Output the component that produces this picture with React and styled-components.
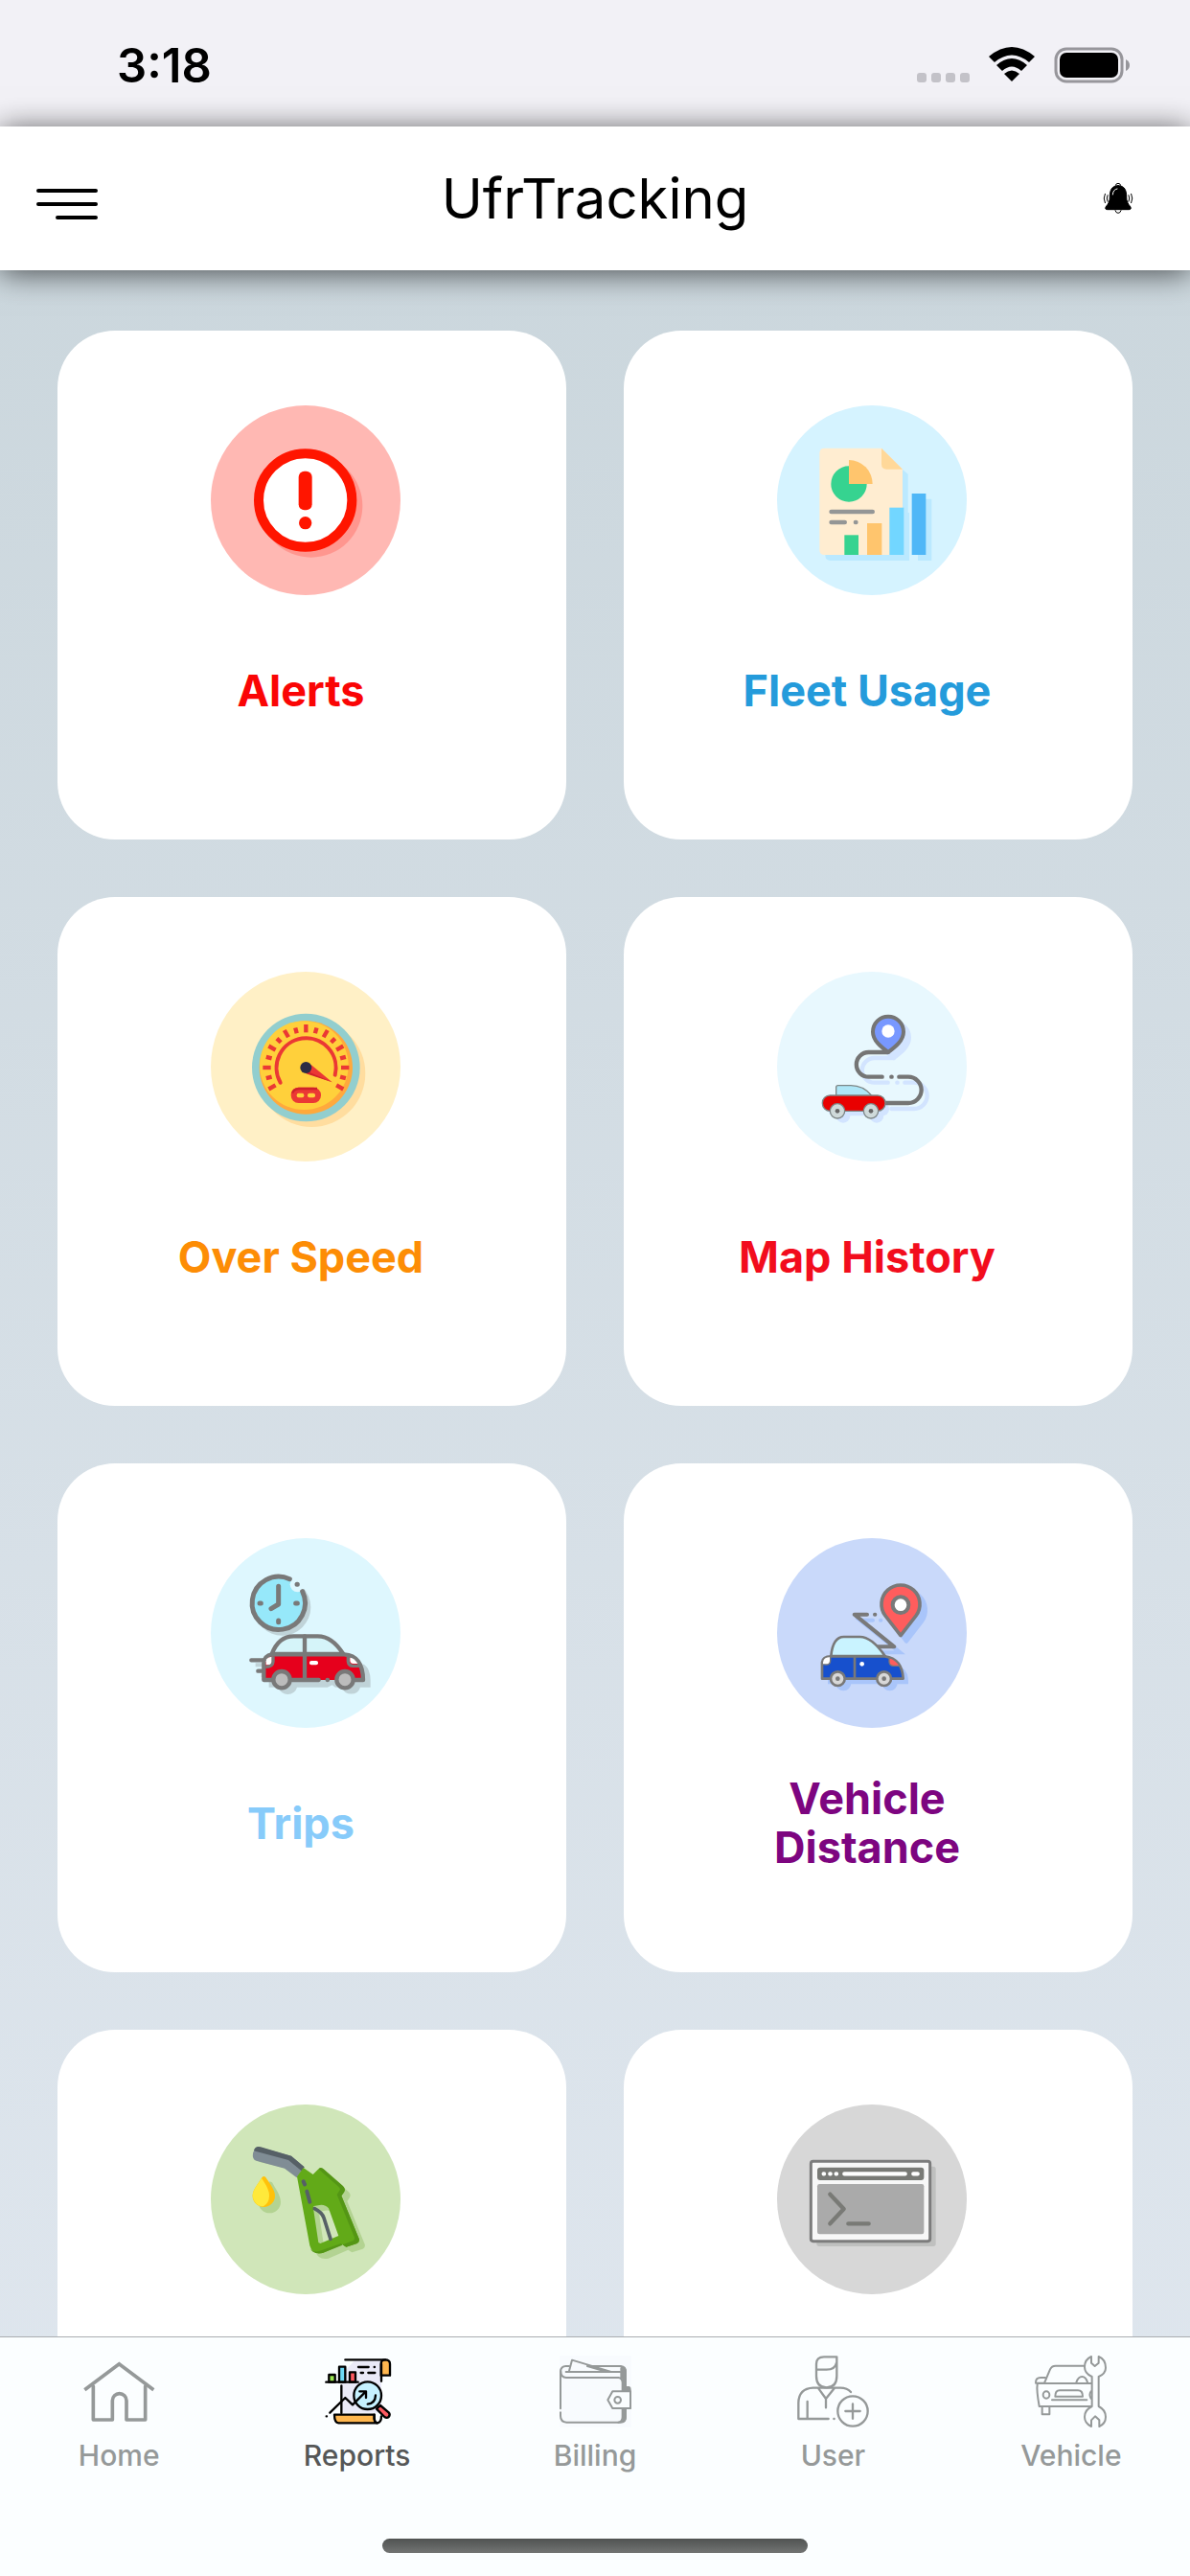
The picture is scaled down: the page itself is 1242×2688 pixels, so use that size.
import { useState } from "react";
import styled, { createGlobalStyle } from "styled-components";

const GlobalStyle = createGlobalStyle`
  * { box-sizing: border-box; }
  body {
    margin: 0;
    font-family: Inter, "Liberation Sans", sans-serif;
    color: #000;
  }
`;

const Screen = styled.div`
  height: 100vh;
  display: flex;
  flex-direction: column;
  overflow: hidden;
  background: linear-gradient(#c9d5db, #e0e7ef);
`;

const StatusBar = styled.div`
  flex: none;
  display: flex;
  align-items: center;
  justify-content: space-between;
  height: 132px;
  padding: 4px 62px 0 122px;
  background: #f2f1f6;
`;

const Clock = styled.time`
  font-size: 49px;
  font-weight: 600;
`;

const StatusIcons = styled.div`
  display: flex;
  align-items: center;
  gap: 20px;
`;

const Header = styled.header`
  flex: none;
  z-index: 1;
  display: grid;
  grid-template-columns: 1fr auto 1fr;
  align-items: center;
  height: 150px;
  padding: 0 58px 0 38px;
  background: #fff;
  box-shadow: 0 3px 30px rgba(0, 0, 0, 0.65);
`;

const Title = styled.h1`
  margin: 0;
  padding-left: 20px;
  font-size: 58px;
  font-weight: 400;
`;

const IconButton = styled.button`
  display: flex;
  justify-self: ${({ $end }) => ($end ? "end" : "start")};
  padding: 0;
  border: none;
  background: none;
  cursor: pointer;
`;

const Main = styled.main`
  flex: 1;
  min-height: 0;
  overflow-y: auto;
  scrollbar-width: none;
`;

const Grid = styled.div`
  display: grid;
  grid-template-columns: 1fr 1fr;
  gap: 60px;
  padding: 63px 60px;
`;

const Card = styled.a`
  display: flex;
  flex-direction: column;
  align-items: center;
  gap: 48px;
  aspect-ratio: 1;
  padding: 78px 13px 0 0;
  border-radius: 60px;
  background: #fff;
  text-decoration: none;
`;

const CardIcon = styled.svg`
  flex: none;
  width: 198px;
  height: 198px;
`;

const CardLabel = styled.span`
  display: flex;
  align-items: center;
  justify-content: center;
  width: 320px;
  min-height: 102px;
  padding-right: 10px;
  color: ${({ $color }) => $color};
  font-size: 45px;
  font-weight: 700;
  line-height: 51px;
  text-align: center;
`;

const TabBar = styled.nav`
  flex: none;
  border-top: 1px solid #a9adb0;
  background: #fbfeff;
`;

const Tabs = styled.div`
  display: flex;
  padding: 19px 0 0;
`;

const Tab = styled.button`
  flex: 1;
  display: flex;
  flex-direction: column;
  align-items: center;
  gap: 9px;
  padding: 0;
  border: none;
  background: none;
  color: ${({ $active }) => ($active ? "#555757" : "#959999")};
  font-family: inherit;
  font-size: 30px;
  font-weight: 500;
  line-height: 40px;
  cursor: pointer;
`;

const TabIcon = styled.svg`
  width: 75px;
  height: 75px;
  fill: none;
  stroke: #959999;
  stroke-width: 7;
  stroke-linecap: round;
  stroke-linejoin: round;
`;

const HomeIndicator = styled.div`
  width: 444px;
  height: 15px;
  margin: 67px auto 24px;
  border-radius: 8px;
  background: linear-gradient(#505352, #727473);
`;

/* card icons */

const AlertIcon = () => (
  <CardIcon viewBox="60 69 594 594" aria-hidden="true">
    <circle cx="357" cy="366" r="297" fill="#ffb8b3" />
    <circle cx="374" cy="384" r="161" fill="#ff968f" />
    <circle cx="356" cy="366" r="146" fill="#fff" stroke="#ff1500" strokeWidth="30" />
    <rect x="335" y="275" width="42" height="122" rx="18" fill="#ff1500" />
    <circle cx="356" cy="437" r="20" fill="#ff1500" />
  </CardIcon>
);

const FleetIcon = () => (
  <CardIcon viewBox="63 69 594 594" aria-hidden="true">
    <circle cx="360" cy="366" r="297" fill="#d5f3ff" />
    <path d="M214 520V230H408L473 284V405H477V555H230Q214 555 214 538ZM504 362H547V555H504Z" fill="#bbe9ff" />
    <path d="M212 203H390L456 269V537H212Q196 537 196 521V219Q196 203 212 203Z" fill="#ffedd1" />
    <path d="M390 203L456 269H406Q390 269 390 253Z" fill="#ffd899" />
    <path d="M288 259A56 56 0 1 0 344 315H288Z" fill="#36d390" />
    <path d="M288 240V315H362A74 75 0 0 0 288 240Z" fill="#ffc56d" />
    <path d="M233 402H362M233 435H275M309 435H310" stroke="#949696" strokeWidth="14" strokeLinecap="round" />
    <rect x="274" y="475" width="44" height="62" fill="#36d390" />
    <rect x="345" y="438" width="46" height="99" fill="#ffc56d" />
    <rect x="415" y="389" width="45" height="148" fill="#72d6ff" />
    <rect x="485" y="345" width="44" height="192" fill="#4fb7f7" />
  </CardIcon>
);

const ticks = [-120, -105, -90, -75, -60, -45, -30, -15, 0, 15, 30, 45, 60, 75, 90, 105, 120];

const SpeedIcon = () => (
  <CardIcon viewBox="60 72 594 594" aria-hidden="true">
    <circle cx="357" cy="369" r="297" fill="#fff0c6" />
    <circle cx="376" cy="390" r="168" fill="#ffdd9f" />
    <circle cx="358" cy="372" r="169" fill="#92cece" />
    <circle cx="358" cy="372" r="146" fill="#ffa93c" />
    <circle cx="352" cy="365" r="139" fill="#ffd03b" />
    {ticks.map((deg) => (
      <path
        key={deg}
        d={deg % 30 === 0 ? "M358 237V262" : "M358 243V261"}
        stroke="#eb3834"
        strokeWidth="13"
        transform={`rotate(${deg} 358 372)`}
      />
    ))}
    <path d="M278 419A93 93 0 1 1 449 395" fill="none" stroke="#eb3834" strokeWidth="12" strokeLinecap="round" />
    <path d="M374 363L440 418L358 388Z" fill="#eb3834" />
    <path d="M363 384L440 418L358 391Z" fill="#cf222b" />
    <circle cx="358" cy="372" r="18" fill="#2b2c45" />
    <rect x="311" y="434" width="94" height="49" rx="24" fill="#eb3834" />
    <path d="M316 452Q318 440 335 438H393" fill="none" stroke="#cf222b" strokeWidth="7" />
    <rect x="329" y="452" width="23" height="14" rx="6" fill="#ffd03b" />
    <rect x="363" y="452" width="24" height="14" rx="6" fill="#ffd03b" />
  </CardIcon>
);

const routePath = "M411 324H350A38 38 0 0 0 350 401H392M421 401H422M445 401H474A41 41 0 0 1 474 483H403";
const pinPath = "M411 324C390 308 363 288 363 260A48 48 0 0 1 459 260C459 288 432 308 411 324Z";

const MapIcon = () => (
  <CardIcon viewBox="63 72 594 594" aria-hidden="true">
    <circle cx="360" cy="369" r="297" fill="#e8f8fe" />
    <g transform="translate(18 18)" stroke="#d2e4ff" fill="none" strokeLinecap="round">
      <path d={routePath} strokeWidth="13" />
      <path d={pinPath} fill="#d2e4ff" strokeWidth="12" />
      <path d="M225 484H375" strokeWidth="42" />
      <circle cx="252" cy="505" r="18" fill="#d2e4ff" strokeWidth="8" />
      <circle cx="357" cy="505" r="18" fill="#d2e4ff" strokeWidth="8" />
    </g>
    <path d={routePath} fill="none" stroke="#757575" strokeWidth="13" strokeLinecap="round" />
    <path d={pinPath} fill="#7898ff" stroke="#757575" strokeWidth="12" strokeLinejoin="round" />
    <circle cx="411" cy="258" r="20" fill="#fff" />
    <g stroke="#7d8686" strokeWidth="4">
      <path d="M248 460V434Q248 428 254 428H294Q333 428 360 460Z" fill="#aee6f7" />
      <rect x="205" y="459" width="197" height="49" rx="24" fill="#e90000" />
      <circle cx="252" cy="508" r="23" fill="#cfdada" />
      <circle cx="357" cy="508" r="23" fill="#cfdada" />
    </g>
    <circle cx="252" cy="508" r="7" fill="#666" />
    <circle cx="357" cy="508" r="7" fill="#666" />
  </CardIcon>
);

const TripsIcon = () => (
  <CardIcon viewBox="60 75 594 594" aria-hidden="true">
    <circle cx="357" cy="372" r="297" fill="#def7fe" />
    <circle cx="284" cy="291" r="89" fill="#c0d3d8" />
    <path d="M242 542V470H540Q560 485 560 520V542H528A30 30 0 0 1 471 542H450L440 535L425 542H330A30 30 0 0 1 272 542ZM200 466H240V478H200ZM218 500H240V510H218Z" fill="#c0d3d8" />
    <circle cx="271" cy="279" r="82" fill="#96e8fa" />
    <circle cx="332" cy="220" r="24" fill="#def7fe" />
    <g fill="none" stroke="#797979" strokeWidth="15" strokeLinecap="round" strokeLinejoin="round">
      <path d="M307 203A83 83 0 1 0 347 242M330 220H331" />
      <path d="M272 226V282L249 296M213 279H217M326 279H331M272 333V338" />
      <path d="M187 457H226M208 491H226" strokeWidth="13" />
      <path d="M251 438Q272 382 320 382H395Q440 382 475 438Z" fill="#d5f4f9" strokeWidth="13" />
      <path d="M251 439H478Q536 443 537 519H226V466Q228 443 251 439Z" fill="#e6001c" stroke="none" />
      <path d="M226 519V466Q228 443 251 439H478Q536 443 537 519H512M226 519H251M315 519H398M425 519H426M354 382V516" strokeWidth="13" />
    </g>
    <path d="M235 454Q240 446 254 446V458Q254 472 242 472H233V460Z" fill="#fff" />
    <path d="M255 445V462Q254 478 232 478M490 444V461Q492 475 505 475H530" fill="none" stroke="#797979" strokeWidth="10" />
    <path d="M496 449Q510 450 520 468H506Q497 468 496 459Z" fill="#fff" />
    <rect x="369" y="459" width="27" height="13" rx="6" fill="#fff" />
    <circle cx="282" cy="518" r="26" fill="#bcbcbc" stroke="#797979" strokeWidth="13" />
    <circle cx="480" cy="518" r="26" fill="#bcbcbc" stroke="#797979" strokeWidth="13" />
  </CardIcon>
);

const DistanceIcon = () => (
  <CardIcon viewBox="63 75 594 594" aria-hidden="true">
    <circle cx="360" cy="372" r="297" fill="#c9d9fa" />
    <g transform="translate(18 18)" fill="#a9c5fa" stroke="#a9c5fa" strokeWidth="12" strokeLinecap="round">
      <path d="M450 380L402 318A60 60 0 1 1 498 318Z" strokeLinejoin="round" />
      <path d="M345 314H305L430 415H378M369 314H370" fill="none" />
      <path d="M210 470H436Q450 480 450 508H210Z" />
      <circle cx="253" cy="511" r="18" />
      <circle cx="398" cy="511" r="18" />
    </g>
    <path d="M345 314H305L430 415H378M369 314H370" fill="none" stroke="#797979" strokeWidth="12" strokeLinecap="round" strokeLinejoin="round" />
    <path d="M450 380L402 318A60 60 0 1 1 498 318Z" fill="#ff5d5d" stroke="#797979" strokeWidth="11" strokeLinejoin="round" />
    <circle cx="450" cy="284" r="25" fill="#fff" stroke="#797979" strokeWidth="12" />
    <g stroke="#797979" strokeWidth="8" strokeLinejoin="round">
      <path d="M232 444Q238 384 272 384H322Q360 384 401 444Z" fill="#c9f3ff" />
      <path d="M204 515V464Q206 445 232 445H401Q455 453 458 515Z" fill="#1750cd" />
      <path d="M306 445V515" />
      <path d="M205 470V464Q207 445 230 446V458Q230 471 216 471Z" fill="#fff" strokeWidth="4" />
      <path d="M414 449Q437 456 447 475H428Q415 475 414 462Z" fill="#ff5d5d" strokeWidth="4" />
      <circle cx="253" cy="515" r="22" fill="#d8d8d8" />
      <circle cx="398" cy="515" r="22" fill="#d8d8d8" />
    </g>
    <circle cx="253" cy="515" r="7" fill="#797979" />
    <circle cx="398" cy="515" r="7" fill="#797979" />
    <circle cx="329" cy="469" r="7" fill="#fff" />
  </CardIcon>
);

const nozzlePath =
  "M330 304L350 276L380 297L395 282Q404 274 413 282L474 335Q482 343 477 352L469 364L524 498Q527 508 518 513L484 524L472 516L410 543Q378 549 370 520ZM382 396V410L397 510L403 513L460 489L429 403Q418 390 400 393Z";

const FuelIcon = () => (
  <CardIcon viewBox="60 78 594 594" aria-hidden="true">
    <circle cx="357" cy="375" r="297" fill="#d0e6b9" />
    <g transform="translate(18 17)" fill="#b3d392" fillRule="evenodd">
      <path d={nozzlePath} />
      <path d="M226 302C208 330 190 346 191 366A35 35 0 0 0 261 366C261 344 240 318 234 305Z" />
      <path d="M192 240L290 263L325 290L330 270L200 225Z" />
    </g>
    <path d="M192 230L198 216Q204 208 216 212L312 239L353 274L329 307L291 278L202 254Q189 249 192 230Z" fill="#808d95" />
    <path d="M195 222Q200 206 216 211L312 239L353 274L344 286L303 252L200 224Z" fill="#566066" />
    <path d={nozzlePath} fill="#62aa18" fillRule="evenodd" />
    <path d="M397 280Q404 272 413 280L474 333Q484 343 477 353L469 364L524 498Q527 508 518 513L484 524L472 517L505 505Q512 501 509 492L455 360L464 346Q466 339 460 335Z" fill="#549615" />
    <path d="M370 525Q376 541 397 538L468 513L472 518L410 543Q378 549 370 525Z" fill="#549615" />
    <path d="M350 319L354 328M361 350L370 383" stroke="#566066" strokeWidth="12" strokeLinecap="round" />
    <path d="M385 404Q409 416 414 433L435 499" fill="none" stroke="#566066" strokeWidth="11" strokeLinecap="round" />
    <path d="M220 307Q226 300 232 306C242 321 261 344 261 364A35 35 0 0 1 191 364C190 346 210 325 220 307Z" fill="#ffc10a" />
    <path d="M219 308C233 330 243 344 243 364Q243 386 225 397A34 34 0 0 1 191 364C190 346 210 325 219 308Z" fill="#ffe93b" />
  </CardIcon>
);

const ConsoleIcon = () => (
  <CardIcon viewBox="63 78 594 594" aria-hidden="true">
    <circle cx="360" cy="375" r="297" fill="#d7d7d7" />
    <rect x="187" y="272" width="373" height="250" rx="8" fill="#bfc0bf" />
    <rect x="169" y="256" width="373" height="250" rx="7" fill="#f7f7f7" stroke="#7c7c7c" strokeWidth="9" />
    <rect x="189" y="275" width="334" height="40" rx="9" fill="#797a76" />
    <rect x="189" y="327" width="334" height="157" rx="7" fill="#aaa" />
    <path d="M274 295H464M490 295H503M209 295H210M229 295H230M248 295H249" stroke="#fff" strokeWidth="13" strokeLinecap="round" />
    <path d="M229 359L272 405L229 451M286 451H350" fill="none" stroke="#797a76" strokeWidth="13" strokeLinecap="round" strokeLinejoin="round" />
  </CardIcon>
);

/* tab icons */

const HomeIcon = () => (
  <TabIcon viewBox="0 0 225 225" aria-hidden="true">
    <g strokeWidth="11">
      <path d="M4 107L112 26L220 107" strokeLinecap="butt" strokeLinejoin="miter" />
      <path d="M31 96V201H91V141A22 22 0 0 1 135 141V201H194V96" />
    </g>
  </TabIcon>
);

const ReportsIcon = () => (
  <TabIcon viewBox="15 36 225 225" aria-hidden="true">
    <path d="M80 95L120 52H204V215H80Z" fill="#eaeaf8" stroke="none" />
    <g stroke="#000" strokeWidth="7">
      <path d="M203 98V62Q203 49 216 49Q231 49 231 62V98Z" fill="#ffb74f" />
      <path d="M91 49H217M204 62V116" />
      <path d="M40 119V96H59V119Z" fill="#9be851" />
      <path d="M72 119V71H91V119Z" fill="#6dd9f5" />
      <path d="M105 119V88H123V119Z" fill="#fd5a61" />
      <path d="M31 119H131M132 72H164M182 72H183M140 90H147M163 90H184M79 130V216" />
      <path d="M189 203L201 192L227 214Q233 221 227 228Q221 233 214 228Z" fill="#fd5a61" />
      <path d="M57 221H182Q180 247 192 247H70Q57 246 57 221Z" fill="#ffb74f" />
      <path d="M182 221Q180 247 191 247Q204 246 204 226" />
      <circle cx="161" cy="161" r="43" fill="#c6f1ff" />
      <path d="M32 226H33M43 215L91 168L114 190L155 149M136 148H156V168M186 160Q185 185 161 188" />
    </g>
  </TabIcon>
);

const BillingIcon = () => (
  <TabIcon viewBox="756 36 225 225" aria-hidden="true">
    <rect x="756" y="36" width="225" height="225" fill="#f8fbfe" stroke="none" />
    <path d="M946 68Q966 69 966 88V132H974Q980 133 980 142V203H966V226Q966 247 946 247Q954 240 954 228V202H974V148H954V119Q954 106 942 105H948V82Q953 75 946 68Z" fill="#959999" stroke="none" />
    <g strokeWidth="6">
      <path d="M759 202V86Q760 69 776 69H786M844 69H948Q963 71 963 86V146M963 202V228Q963 245 947 245H778Q759 244 759 225V214" />
      <path d="M760 85Q760 105 777 105H940Q952 106 953 120V148M953 202V228Q953 243 940 245M949 75V103M776 87H944M786 84L795 50L915 86M843 69L900 86" />
      <path d="M978 148H922L907 175L922 201H978Z" fill="#fbfeff" />
      <circle cx="938" cy="175" r="10" />
    </g>
  </TabIcon>
);

const UserIcon = () => (
  <TabIcon viewBox="0 0 225 225" aria-hidden="true">
    <path d="M60 26Q60 4 84 4H124V64Q124 100 92 100Q60 100 60 64ZM60 44H92Q119 44 124 20" />
    <path d="M98 198H4V148Q5 103 50 101H135Q157 101 168 114M32 144V197M67 103L90 135L116 103M90 135V163M115 198H116" />
    <circle cx="174" cy="174" r="47" />
    <path d="M174 151V197M151 174H197" />
  </TabIcon>
);

const VehicleIcon = () => (
  <TabIcon viewBox="0 0 225 225" aria-hidden="true">
    <g strokeWidth="6">
      <path d="M30 86L48 43Q53 32 65 32H154M8 87H177M8 90Q5 108 14 159H177M54 139H163" />
      <path d="M64 128Q64 109 78 109H135Q150 109 150 128ZM3 84Q3 69 18 69H33M3 86H30M130 84Q136 66 148 66Q160 66 165 84" />
      <path d="M23 161V184H46V161M176 112Q169 122 176 134" />
      <ellipse cx="36" cy="123" rx="10" ry="11" />
      <path d="M177 3V23L188 33L200 23V3Q222 12 222 38Q222 56 200 66V159Q222 170 222 192Q222 213 202 222V202L189 190L177 202V222Q156 212 156 192Q156 170 179 159V66Q156 56 156 36Q156 12 177 3Z" fill="#fbfeff" />
    </g>
  </TabIcon>
);

const reports = [
  { name: "Alerts", label: "Alerts", color: "#fa0505", Icon: AlertIcon },
  { name: "Fleet Usage", label: "Fleet Usage", color: "#249bdb", Icon: FleetIcon },
  { name: "Over Speed", label: "Over Speed", color: "#fd8d05", Icon: SpeedIcon },
  { name: "Map History", label: "Map History", color: "#f20d1d", Icon: MapIcon },
  { name: "Trips", label: "Trips", color: "#87cbfa", Icon: TripsIcon },
  { name: "Vehicle Distance", label: "Vehicle Distance", color: "#7d0580", Icon: DistanceIcon },
  { name: "Fuel", Icon: FuelIcon },
  { name: "Commands", Icon: ConsoleIcon },
];

const tabs = [
  { label: "Home", Icon: HomeIcon },
  { label: "Reports", Icon: ReportsIcon },
  { label: "Billing", Icon: BillingIcon },
  { label: "User", Icon: UserIcon },
  { label: "Vehicle", Icon: VehicleIcon },
];

export default function App() {
  const [active, setActive] = useState("Reports");

  return (
    <Screen>
      <GlobalStyle />
      <StatusBar>
        <Clock>3:18</Clock>
        <StatusIcons>
          <svg width="56" height="38" viewBox="0 0 56 38" fill="#c3c2c8">
            <rect x="1" y="27" width="10" height="10" rx="3" />
            <rect x="16" y="27" width="10" height="10" rx="3" />
            <rect x="31" y="27" width="10" height="10" rx="3" />
            <rect x="46" y="27" width="10" height="10" rx="3" />
          </svg>
          <svg width="48" height="38" viewBox="0 0 48 38">
            <path d="M0 10Q24 -10 48 10L42 16Q24 1 6 16Z" />
            <path d="M8 19Q24 5 40 19L34 25Q24 16 14 25Z" />
            <path d="M16 28Q24 21 32 28L24 36Z" />
          </svg>
          <svg width="80" height="38" viewBox="0 0 80 38">
            <rect x="2" y="2" width="69" height="34" rx="11" fill="none" stroke="#97969b" strokeWidth="3" />
            <rect x="6" y="6" width="61" height="26" rx="7" />
            <path d="M75 13Q79 15 79 19Q79 23 75 25Z" fill="#97969b" />
          </svg>
        </StatusIcons>
      </StatusBar>

      <Header>
        <IconButton type="button" aria-label="Menu">
          <svg width="64" height="54" viewBox="0 0 64 54" stroke="#000" strokeWidth="4" strokeLinecap="round">
            <path d="M2 19H62M2 33H62M22 47H62" />
          </svg>
        </IconButton>
        <Title>UfrTracking</Title>
        <IconButton type="button" aria-label="Notifications" $end>
          <svg width="34" height="32" viewBox="0 0 102 96" fill="none" stroke="#000" strokeWidth="3" strokeLinecap="round">
            <path d="M51 8C30 8 25 24 25 42C25 58 21 64 12 75Q9 83 17 83H85Q93 83 90 75C81 64 77 58 77 42C77 24 72 8 51 8Z" fill="#000" />
            <path d="M43 7Q44 1 51 1Q58 1 59 7M42 86Q44 94 51 94Q58 94 60 86M10 34Q3 48 10 62M18 38Q13 48 18 58M92 34Q99 48 92 62M84 38Q89 48 84 58" />
            <path d="M34 36Q35 20 48 18" stroke="#fff" />
          </svg>
        </IconButton>
      </Header>

      <Main>
        <Grid>
          {reports.map(({ name, label, color, Icon }) => (
            <Card href="#" key={name} aria-label={name}>
              <Icon />
              {label && <CardLabel $color={color}>{label}</CardLabel>}
            </Card>
          ))}
        </Grid>
      </Main>

      <TabBar>
        <Tabs>
          {tabs.map(({ label, Icon }) => (
            <Tab key={label} type="button" $active={active === label} onClick={() => setActive(label)}>
              <Icon />
              {label}
            </Tab>
          ))}
        </Tabs>
        <HomeIndicator />
      </TabBar>
    </Screen>
  );
}
